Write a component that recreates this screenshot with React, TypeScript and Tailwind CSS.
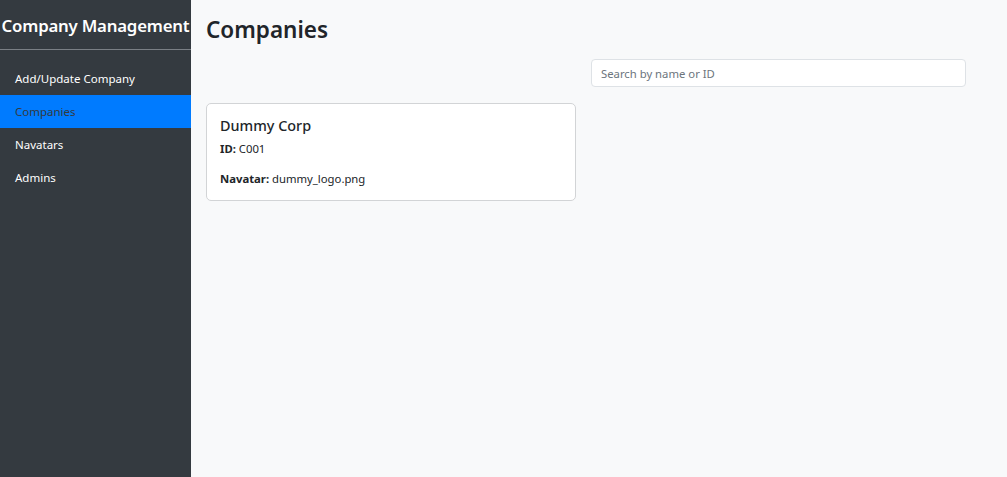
import { useState } from 'react';

const navItems = ['Add/Update Company', 'Companies', 'Navatars', 'Admins'];

const companies = [{ name: 'Dummy Corp', id: 'C001', navatar: 'dummy_logo.png' }];

export default function App() {
  const [active, setActive] = useState('Companies');
  const [query, setQuery] = useState('');

  const filtered = companies.filter(
    (c) =>
      c.name.toLowerCase().includes(query.toLowerCase()) ||
      c.id.toLowerCase().includes(query.toLowerCase())
  );

  return (
    <div
      className="flex h-[477px] w-full bg-[#f8f9fa] text-[#212529]"
      style={{ fontFamily: '"Noto Sans", "Open Sans", sans-serif' }}
    >
      {/* Sidebar */}
      <aside className="w-[191px] shrink-0 overflow-hidden bg-[#343a40] text-white">
        <h2 className="h-[49px] whitespace-nowrap pt-[13px] text-center text-[16.8px] leading-[26px] font-semibold tracking-[-0.2px]">
          Company Management
        </h2>
        <div className="h-px bg-[#7a7f85]" />
        <nav className="mt-[12px] flex flex-col">
          {navItems.map((item) => (
            <button
              key={item}
              onClick={() => setActive(item)}
              className={`h-[33px] pl-[15px] text-left text-[11.5px] ${
                active === item ? 'bg-[#007bff] text-[#343a40]' : 'text-white'
              }`}
            >
              {item}
            </button>
          ))}
        </nav>
      </aside>

      {/* Main */}
      <main className="flex-1 pl-[15px] pt-[14px]">
        <h1 className="text-[22.5px] leading-[32px] font-semibold">Companies</h1>

        <div className="mt-[13px] flex w-[760px] justify-end">
          <input
            value={query}
            onChange={(e) => setQuery(e.target.value)}
            placeholder="Search by name or ID"
            className="h-[28px] w-[375px] rounded-[4px] border border-[#dee2e6] bg-white px-[9px] text-[11.3px] outline-none placeholder:text-[#6c757d]"
          />
        </div>

        <div className="mt-[16px] grid grid-cols-[370px_370px] gap-[15px]">
          {filtered.map((c) => (
            <div
              key={c.id}
              className="h-[98px] rounded-[5px] border border-[#d2d4d6] bg-white px-[13px] pt-[11px]"
            >
              <h5 className="text-[14.4px] leading-[22px] font-medium">{c.name}</h5>
              <p className="mt-[3px] text-[11.3px] leading-[18px]">
                <strong>ID:</strong> {c.id}
              </p>
              <p className="mt-[12px] text-[11.3px] leading-[18px]">
                <strong>Navatar:</strong> {c.navatar}
              </p>
            </div>
          ))}
        </div>
      </main>
    </div>
  );
}
